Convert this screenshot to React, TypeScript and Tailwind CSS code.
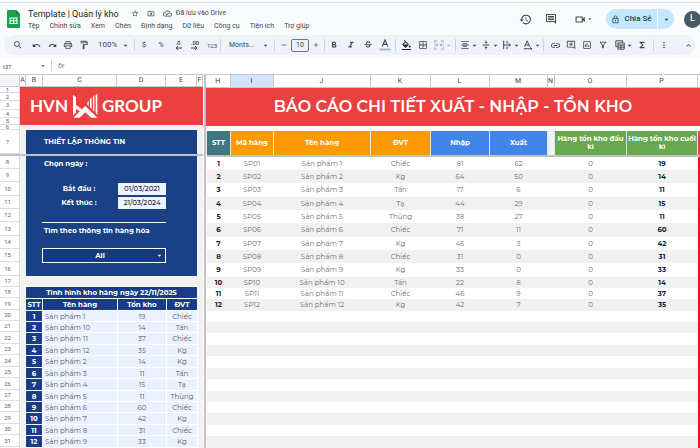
import type { ReactNode } from 'react';
import {
  MdAdd,
  MdArrowDropDown,
  MdBorderAll,
  MdFormatAlignCenter,
  MdFormatBold,
  MdFormatColorFill,
  MdFormatItalic,
  MdFunctions,
  MdHistory,
  MdKeyboardArrowUp,
  MdLink,
  MdMoreVert,
  MdOutlineAddComment,
  MdOutlineCloudDone,
  MdOutlineComment,
  MdOutlineDriveFileMove,
  MdOutlineFilterAlt,
  MdOutlineFormatPaint,
  MdOutlineInsertChart,
  MdOutlineLock,
  MdOutlinePrint,
  MdOutlineVideocam,
  MdRedo,
  MdRemove,
  MdSearch,
  MdStarOutline,
  MdStrikethroughS,
  MdUndo,
  MdVerticalAlignCenter,
} from 'react-icons/md';

const MENUS = ['Tệp', 'Chỉnh sửa', 'Xem', 'Chèn', 'Định dạng', 'Dữ liệu', 'Công cụ', 'Tiện ích', 'Trợ giúp'];

// Heights of the frozen rows 1-7
const FROZEN_ROWS = ['h-[6px]', 'h-[8px]', 'h-[9px]', 'h-[8px]', 'h-[7px]', 'h-[5px]', 'h-[24px]'];

// Heights of rows 8-31
const BODY_ROWS = [
  'h-[13px]', 'h-[13px]', 'h-[14px]', 'h-[13px]', 'h-[13px]', 'h-[14px]', 'h-[13px]', 'h-[13px]', 'h-[14px]',
  'h-[11px]', 'h-[11px]', 'h-[12px]', 'h-[11px]', 'h-[11px]', 'h-[12px]', 'h-[11px]', 'h-[12px]', 'h-[11px]',
  'h-[12px]', 'h-[11px]', 'h-[11px]', 'h-[12px]', 'h-[11px]', 'h-[12px]',
];

interface Product {
  name: string;
  unit: string;
  received: number;
  issued: number;
}

const PRODUCTS: Product[] = [
  { name: 'Sản phẩm 1', unit: 'Chiếc', received: 81, issued: 62 },
  { name: 'Sản phẩm 2', unit: 'Kg', received: 64, issued: 50 },
  { name: 'Sản phẩm 3', unit: 'Tấn', received: 17, issued: 6 },
  { name: 'Sản phẩm 4', unit: 'Tạ', received: 44, issued: 29 },
  { name: 'Sản phẩm 5', unit: 'Thùng', received: 38, issued: 27 },
  { name: 'Sản phẩm 6', unit: 'Chiếc', received: 71, issued: 11 },
  { name: 'Sản phẩm 7', unit: 'Kg', received: 45, issued: 3 },
  { name: 'Sản phẩm 8', unit: 'Chiếc', received: 31, issued: 0 },
  { name: 'Sản phẩm 9', unit: 'Kg', received: 33, issued: 0 },
  { name: 'Sản phẩm 10', unit: 'Tấn', received: 22, issued: 8 },
  { name: 'Sản phẩm 11', unit: 'Chiếc', received: 46, issued: 9 },
  { name: 'Sản phẩm 12', unit: 'Kg', received: 42, issued: 7 },
];

// The side list is sorted by name as text
const STOCK = [...PRODUCTS].sort((a, b) => (a.name < b.name ? -1 : 1));

export default function App() {
  return (
    <div className="flex min-h-screen flex-col overflow-hidden bg-[#f9fbfd] font-['Roboto',sans-serif] text-[#444746]">
      <TitleBar />
      <Toolbar />
      <FormulaBar />
      <main className="flex flex-1 border-t border-[#c7c9cc] bg-white">
        <RowNumbers />
        <LeftPane />
        <div className="w-[3px] shrink-0 border-l border-white bg-[#bfc1c4]" />
        <RightPane />
      </main>
    </div>
  );
}

function TitleBar() {
  return (
    <header className="mt-[2px] flex h-[33px] items-center border-t border-[#dfe1e4] pl-[7px]">
      <SheetsLogo />
      <div className="ml-2 flex flex-col">
        <div className="flex h-[14px] items-center">
          <h1 className="text-[9px] leading-[14px] text-[#1f1f1f]">Template | Quản lý kho</h1>
          <div className="ml-3 flex items-center gap-2">
            <IconButton label="Gắn dấu sao" className="w-2"><MdStarOutline size={9} /></IconButton>
            <IconButton label="Di chuyển" className="w-2"><MdOutlineDriveFileMove size={9} /></IconButton>
            <MdOutlineCloudDone size={9} />
          </div>
          <span className="ml-1 text-[7px]">Đã lưu vào Drive</span>
        </div>
        <nav className="flex h-[11px] items-center gap-[10px]">
          {MENUS.map((menu) => (
            <button key={menu} type="button" className="text-[7px] leading-[10px] whitespace-nowrap">
              {menu}
            </button>
          ))}
        </nav>
      </div>
      <div className="ml-auto flex items-center">
        <IconButton label="Lịch sử phiên bản" className="w-4"><MdHistory size={13} /></IconButton>
        <IconButton label="Nhận xét" className="ml-[10px] w-4"><MdOutlineComment size={12} /></IconButton>
        <IconButton label="Cuộc gọi" className="ml-[15px] w-5">
          <MdOutlineVideocam size={13} />
          <MdArrowDropDown size={8} />
        </IconButton>
        <div className="ml-3 flex h-5 overflow-hidden rounded-full bg-[#c2e7ff] text-[#24384a]">
          <button type="button" className="flex w-[52px] items-center justify-center gap-1 border-r border-[#f9fbfd] text-[8px] font-medium">
            <MdOutlineLock size={9} />
            Chia Sẻ
          </button>
          <IconButton label="Tùy chọn chia sẻ" className="h-5 w-4"><MdArrowDropDown size={9} /></IconButton>
        </div>
        <button type="button" className="ml-[10px] -mr-px h-[17px] w-[17px] rounded-full bg-[#455a64] text-[9px] font-medium text-white">
          L
        </button>
      </div>
    </header>
  );
}

function Toolbar() {
  return (
    <div className="mx-1 flex h-5 items-center rounded-full bg-[#eff3f9] pl-[6px] whitespace-nowrap">
      <IconButton label="Tìm kiếm" className="mr-[2px] w-4"><MdSearch size={10} /></IconButton>
      <IconButton label="Hủy" className="w-4"><MdUndo size={9} /></IconButton>
      <IconButton label="Làm lại" className="w-4"><MdRedo size={9} /></IconButton>
      <IconButton label="In" className="w-4"><MdOutlinePrint size={10} /></IconButton>
      <IconButton label="Sao chép định dạng" className="w-4"><MdOutlineFormatPaint size={10} /></IconButton>
      <button type="button" className="ml-[6px] flex w-8 items-center justify-between text-[8px]">
        100%
        <MdArrowDropDown size={9} />
      </button>
      <Separator className="ml-1" />
      <div className="ml-px flex gap-px text-[8px]">
        <IconButton label="Tiền tệ" className="w-4">$</IconButton>
        <IconButton label="Phần trăm" className="w-4 text-[7px]">%</IconButton>
        <IconButton label="Giảm số thập phân" className="w-4"><DecimalIcon digits=".0" left /></IconButton>
        <IconButton label="Tăng số thập phân" className="w-4"><DecimalIcon digits=".00" /></IconButton>
        <IconButton label="Định dạng khác" className="w-4 text-[6px]">123</IconButton>
      </div>
      <Separator />
      <button type="button" className="ml-2 flex w-[41px] items-center justify-between text-[7px]">
        Monts...
        <MdArrowDropDown size={9} />
      </button>
      <Separator className="ml-1" />
      <IconButton label="Giảm cỡ chữ" className="ml-[3px] w-3"><MdRemove size={8} /></IconButton>
      <input
        aria-label="Cỡ chữ"
        defaultValue="10"
        className="mx-px h-[13px] w-[18px] rounded-[2px] border border-[#747775] text-center text-[7px] leading-[11px]"
      />
      <IconButton label="Tăng cỡ chữ" className="w-3"><MdAdd size={8} /></IconButton>
      <Separator className="ml-[2px]" />
      <div className="ml-px flex gap-px">
        <IconButton label="In đậm" className="w-4"><MdFormatBold size={10} /></IconButton>
        <IconButton label="In nghiêng" className="w-4"><MdFormatItalic size={10} /></IconButton>
        <IconButton label="Gạch ngang" className="w-4"><MdStrikethroughS size={10} /></IconButton>
        <IconButton label="Màu chữ" className="w-4"><TextColorIcon /></IconButton>
      </div>
      <Separator className="ml-[2px]" />
      <div className="ml-[2px] flex gap-px">
        <IconButton label="Màu nền" className="w-4"><FillIcon /></IconButton>
        <IconButton label="Đường viền" className="w-4"><MdBorderAll size={10} /></IconButton>
        <IconButton label="Hợp nhất ô" className="ml-px w-5 text-[#b4b8bb]">
          <MergeIcon />
          <MdArrowDropDown size={9} />
        </IconButton>
      </div>
      <Separator className="ml-[2px]" />
      <div className="ml-[3px] flex gap-px">
        <IconButton label="Căn ngang" className="w-5"><MdFormatAlignCenter size={10} /><MdArrowDropDown size={9} /></IconButton>
        <IconButton label="Căn dọc" className="w-5"><MdVerticalAlignCenter size={10} /><MdArrowDropDown size={9} /></IconButton>
        <IconButton label="Xuống dòng" className="w-5"><WrapIcon /><MdArrowDropDown size={9} /></IconButton>
        <IconButton label="Xoay chữ" className="w-5"><RotateIcon /><MdArrowDropDown size={9} /></IconButton>
      </div>
      <Separator className="ml-px" />
      <IconButton label="Chèn liên kết" className="ml-[3px] w-4"><MdLink size={11} /></IconButton>
      <IconButton label="Chèn nhận xét" className="w-4"><MdOutlineAddComment size={10} /></IconButton>
      <IconButton label="Chèn biểu đồ" className="w-4"><MdOutlineInsertChart size={10} /></IconButton>
      <IconButton label="Bộ lọc" className="w-4"><MdOutlineFilterAlt size={10} /></IconButton>
      <IconButton label="Chế độ lọc" className="ml-[3px] w-5"><FilterViewIcon /><MdArrowDropDown size={9} /></IconButton>
      <IconButton label="Hàm" className="w-4"><MdFunctions size={10} /></IconButton>
      <Separator className="ml-[3px]" />
      <IconButton label="Thêm" className="ml-[2px] w-4"><MdMoreVert size={10} /></IconButton>
      <IconButton label="Ẩn các trình đơn" className="ml-auto w-4"><MdKeyboardArrowUp size={9} /></IconButton>
    </div>
  );
}

function FormulaBar() {
  return (
    <div className="mt-[3px] flex h-4 items-center bg-white pl-[3px]">
      <label htmlFor="formula" className="w-9 text-[6px]">I37</label>
      <MdArrowDropDown size={8} />
      <Separator className="ml-1" />
      <span className="ml-[6px] font-['Liberation_Sans',sans-serif] text-[8px] text-[#7a7d80] italic">fx</span>
      <input id="formula" className="ml-2 h-3 flex-1 text-[8px] outline-none" />
    </div>
  );
}

function RowNumbers() {
  return (
    <div className="w-5 shrink-0 border-r border-[#d5d7da] text-[6px] leading-[6px] text-[#5f6368]">
      <div className="h-3 border-b border-[#c7c9cc] bg-[#f4f5f6]" />
      {FROZEN_ROWS.map((height, i) => (
        <div key={i} className={`flex items-center justify-center border-b border-[#dcdee0] pr-1 ${height}`}>
          {i + 1}
        </div>
      ))}
      <div className="h-[2px] bg-[#bfc1c4]" />
      {BODY_ROWS.map((height, i) => (
        <div key={i} className={`flex items-center justify-center border-b border-[#dcdee0] pr-1 ${height}`}>
          {i + 8}
        </div>
      ))}
    </div>
  );
}

function LeftPane() {
  return (
    <section className="flex w-[183px] shrink-0 flex-col bg-[#f1f2f4] font-['Montserrat','Inter',sans-serif]">
      <div className="flex h-3 border-b border-[#c7c9cc] bg-white">
        <ColumnLetter className="w-[6px]">A</ColumnLetter>
        <ColumnLetter className="w-[17px]">B</ColumnLetter>
        <ColumnLetter className="w-[74px]">C</ColumnLetter>
        <ColumnLetter className="w-[49px]">D</ColumnLetter>
        <ColumnLetter className="flex-1">E</ColumnLetter>
        <ColumnLetter className="w-[6px]">F</ColumnLetter>
      </div>
      <div className="flex h-[38px] items-center bg-[#ea4040] pl-[10px] font-['Lato',sans-serif] text-[17px] font-bold text-white">
        HVN
        <GroupMark />
        GROUP
      </div>
      <div className="mx-[6px] mt-[5px] flex h-6 items-center bg-[#1a4086] pl-[18px] text-[7px] font-bold text-white">
        THIẾT LẬP THÔNG TIN
      </div>
      <div className="h-[2px] bg-[#bfc1c4]" />
      <SettingsForm />
      <StockTable />
    </section>
  );
}

function SettingsForm() {
  return (
    <form className="mx-[6px] flex h-[120px] flex-col bg-[#1a4086] pr-[31px] pl-4 text-[7px] font-bold text-white">
      <p className="h-[26px] pl-[2px] leading-[16px]">Chọn ngày :</p>
      <DateField id="from" label="Bắt đầu :" value="01/03/2021" />
      <DateField id="to" label="Kết thúc :" value="21/03/2024" />
      <label htmlFor="item" className="mt-3 h-[26px] border-t border-white pl-[2px] leading-[16px]">
        Tìm theo thông tin hàng hóa
      </label>
      <div className="relative flex">
        <select
          id="item"
          className="h-[15px] flex-1 appearance-none border border-white bg-[#163a7e] pr-2 text-center leading-[13px]"
        >
          <option>All</option>
        </select>
        <MdArrowDropDown size={9} className="pointer-events-none absolute top-[3px] right-[2px]" />
      </div>
    </form>
  );
}

function DateField({ id, label, value }: { id: string; label: string; value: string }) {
  return (
    <div className="flex h-[14px] items-center justify-between">
      <label htmlFor={id} className="w-[74px] text-center">{label}</label>
      <input
        id={id}
        defaultValue={value}
        className="h-3 w-12 bg-[#eef3fd] text-center text-[7px] leading-3 font-medium text-[#1d2b45]"
      />
    </div>
  );
}

function StockTable() {
  const head = 'border border-white bg-[#1a3c86] p-0 font-bold text-white';
  const cell = 'border border-white bg-[#ebf1fe] p-0 text-center';

  return (
    <div className="mx-[5px] mt-[10px]">
      <table className="w-full table-fixed border-collapse text-[7px] leading-[9px] text-[#555b66]">
        <colgroup>
          <col className="w-[17px]" />
          <col className="w-[75px]" />
          <col className="w-[49px]" />
          <col />
        </colgroup>
        <thead>
          <tr className="h-[12px]">
            <th colSpan={4} className={head}>Tình hình kho hàng ngày 22/11/2025</th>
          </tr>
          <tr className="h-[12px]">
            <th className={head}>STT</th>
            <th className={head}>Tên hàng</th>
            <th className={head}>Tồn kho</th>
            <th className={head}>ĐVT</th>
          </tr>
        </thead>
        <tbody>
          {STOCK.map((product, i) => (
            <tr key={product.name} className={BODY_ROWS[i + 12]}>
              <th className={head}>{i + 1}</th>
              <td className="border border-white bg-[#ebf1fe] p-0 pl-[2px]">{product.name}</td>
              <td className={cell}>{product.received - product.issued}</td>
              <td className={cell}>{product.unit}</td>
            </tr>
          ))}
        </tbody>
      </table>
    </div>
  );
}

function RightPane() {
  return (
    <section className="flex min-w-0 flex-1 flex-col font-['Montserrat','Inter',sans-serif]">
      <table className="w-full table-fixed border-collapse font-['Roboto',sans-serif] text-[7px] leading-[10px]">
        <ReportColumns />
        <thead>
          <tr className="h-3">
            {['H', 'I', 'J', 'K', 'L', 'M', 'N', 'O', 'P', ''].map((letter) => (
              <th
                key={letter}
                className={`border-r border-b border-[#c7c9cc] p-0 font-normal ${letter === 'I' ? 'bg-[#d3e3fd] text-[#1f3b6b]' : 'bg-white'}`}
              >
                {letter}
              </th>
            ))}
          </tr>
        </thead>
      </table>
      <h2 className="flex h-[38px] items-center justify-center bg-[#ea4040] text-[16px] font-semibold whitespace-nowrap text-white">
        BÁO CÁO CHI TIẾT XUẤT - NHẬP - TỒN KHO
      </h2>
      <ReportTable />
    </section>
  );
}

function ReportColumns() {
  return (
    <colgroup>
      <col className="w-[24px]" />
      <col className="w-[43px]" />
      <col className="w-[97px]" />
      <col className="w-[60px]" />
      <col className="w-[59px]" />
      <col className="w-[58px]" />
      <col className="w-[7px]" />
      <col className="w-[72px]" />
      <col className="w-[71px]" />
      <col className="w-[3px]" />
    </colgroup>
  );
}

function ReportTable() {
  const head = 'border-x border-[#e4e6e8] p-0 font-bold';

  return (
    <table className="mt-[5px] w-full table-fixed border-collapse text-center text-[7px] leading-[9px] text-[#6b6e73]">
      <ReportColumns />
      <thead className="leading-[8px] text-white">
        <tr className="h-6">
          <th className={`${head} bg-[#41787f]`}>STT</th>
          <th className={`${head} bg-[#ff9900]`}>Mã hàng</th>
          <th className={`${head} bg-[#ff9900]`}>Tên hàng</th>
          <th className={`${head} bg-[#ff9900]`}>ĐVT</th>
          <th className={`${head} bg-[#4285e8]`}>Nhập</th>
          <th className={`${head} bg-[#4285e8]`}>Xuất</th>
          <td className="bg-[#f1f2f4] p-0" />
          <th className={`${head} bg-[#6aa84f]`}>Hàng tồn kho đầu kì</th>
          <th className={`${head} bg-[#6aa84f]`}>Hàng tồn kho cuối kì</th>
          <td className="bg-[#ea4040] p-0" />
        </tr>
        <tr className="h-[2px]">
          <td colSpan={10} className="bg-[#bfc1c4] p-0" />
        </tr>
      </thead>
      <tbody>
        {BODY_ROWS.map((height, i) => {
          const product = PRODUCTS[i];
          return (
            <tr key={i} className={`${height} ${i % 2 ? 'bg-[#f1f1f1]' : 'bg-white'}`}>
              <td className="p-0 font-bold text-[#1f1f1f]">{product && i + 1}</td>
              <td className="p-0">{product && `SP${String(i + 1).padStart(2, '0')}`}</td>
              <td className="p-0">{product?.name}</td>
              <td className="p-0">{product?.unit}</td>
              <td className="p-0">{product?.received}</td>
              <td className="p-0">{product?.issued}</td>
              <td className="p-0" />
              <td className="p-0">{product && 0}</td>
              <td className="p-0 font-bold text-[#1c2340]">{product && product.received - product.issued}</td>
              <td className="bg-[#e01e1e] p-0" />
            </tr>
          );
        })}
      </tbody>
    </table>
  );
}

function IconButton({ label, className = '', children }: { label: string; className?: string; children: ReactNode }) {
  return (
    <button type="button" aria-label={label} className={`flex min-h-4 shrink-0 items-center justify-center ${className}`}>
      {children}
    </button>
  );
}

function Separator({ className = '' }: { className?: string }) {
  return <span className={`h-3 w-px shrink-0 bg-[#d0d4da] ${className}`} />;
}

function ColumnLetter({ className = '', children }: { className?: string; children: ReactNode }) {
  return (
    <span className={`flex shrink-0 items-center justify-center border-r border-[#c7c9cc] font-['Roboto',sans-serif] text-[7px] ${className}`}>
      {children}
    </span>
  );
}

function SheetsLogo() {
  return (
    <svg viewBox="0 0 13 18" className="h-[18px] w-[13px] shrink-0">
      <path d="M1.2 0H9l4 4v12.8c0 .7-.5 1.2-1.2 1.2H1.2C.5 18 0 17.5 0 16.8V1.2C0 .5.5 0 1.2 0Z" fill="#12a648" />
      <path d="M9 0l4 4H9Z" fill="#0b7a33" />
      <path d="M2.5 7.5h8V14h-8ZM3.6 8.6v1.6H6V8.6Zm3.5 0v1.6h2.3V8.6ZM3.6 11.3v1.6H6v-1.6Zm3.5 0v1.6h2.3v-1.6Z" fill="#fff" fillRule="evenodd" />
    </svg>
  );
}

function GroupMark() {
  return (
    <svg viewBox="0 0 78 72" className="mx-1 h-6 w-[26px] shrink-0" fill="#fff">
      <path d="M3 2l9 8v46l-9 8Z" />
      <path d="M12 32l20 16-6 6-14-10Z" />
      <path d="M4 71l36-35 36 35H57L40 55 23 71Z" />
      <path d="M46 25l4-5v16l-4-4ZM54 16l5-6v34l-5-5ZM63 8l4-5v50l-4-5ZM71 2l5-2v62l-5-5Z" />
    </svg>
  );
}

function DecimalIcon({ digits, left }: { digits: string; left?: boolean }) {
  return (
    <span className="flex flex-col items-center text-[6px] leading-[6px] font-medium">
      {digits}
      <svg viewBox="0 0 8 4" className={`h-1 w-2 ${left ? '' : 'rotate-180'}`} fill="none" stroke="currentColor">
        <path d="M8 2H2M4 0L2 2l2 2" />
      </svg>
    </span>
  );
}

function TextColorIcon() {
  return (
    <svg viewBox="0 0 12 12" className="h-3 w-3">
      <path d="M3.2 7.5L6 1l2.8 6.5M4.2 5.4h3.6" fill="none" stroke="currentColor" strokeWidth="1.1" />
      <path d="M.5 9.5h11v2H.5Z" fill="#a9b4d6" />
    </svg>
  );
}

function FillIcon() {
  return (
    <span className="flex h-3 w-3 items-start justify-center overflow-hidden">
      <MdFormatColorFill size={11} className="text-[#1f1f1f]" viewBox="0 0 24 20" />
    </span>
  );
}

function MergeIcon() {
  return (
    <svg viewBox="0 0 12 12" className="h-[10px] w-[10px]" fill="none" stroke="currentColor" strokeWidth="1.3">
      <path d="M4 1H1v3M8 1h3v3M4 11H1V8M8 11h3V8M0 6h4M3 4.5L4.5 6 3 7.5M12 6H8M9 4.5L7.5 6 9 7.5" />
    </svg>
  );
}

function WrapIcon() {
  return (
    <svg viewBox="0 0 12 12" className="h-[10px] w-[10px]" fill="none" stroke="currentColor" strokeWidth="1.2">
      <path d="M2 1v10M6 1v3M6 8v3M2 6h8M8 4l2 2-2 2" />
    </svg>
  );
}

function RotateIcon() {
  return (
    <svg viewBox="0 0 12 12" className="h-[10px] w-[10px]" fill="none" stroke="currentColor" strokeWidth="1.2">
      <path d="M2 8l3-7 3 7M3 6h4M1 10.5h9.5M9 8.8l1.7 1.7L9 12" />
    </svg>
  );
}

function FilterViewIcon() {
  return (
    <svg viewBox="0 0 12 12" className="h-[10px] w-[10px]" fill="none" stroke="currentColor" strokeWidth="1.2">
      <path d="M9 2.5V1H1v7h1.5M3.5 3.5H11V11H3.5ZM3.5 6H11M3.5 8.5H11M7 6v5" />
    </svg>
  );
}
